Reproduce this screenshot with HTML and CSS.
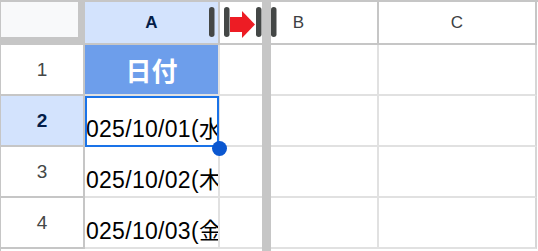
FILE: index.html
```html
<!DOCTYPE html>
<html lang="ja">
<head>
<meta charset="utf-8">
<title>Sheet</title>
<link rel="stylesheet" href="styles.css">
</head>
<body>
<div class="sheet">
  <div class="grid">
    <div class="corner"><div class="corner-inner"></div></div>
    <div class="colhead active">A</div>
    <div class="colhead wide">B</div>
    <div class="colhead last">C</div>

    <div class="rowhead">1</div>
    <div class="cell title"><span>日付</span></div>
    <div class="cell"></div>
    <div class="cell last"></div>

    <div class="rowhead active">2</div>
    <div class="cell selected"><div class="clip"><span>2025/10/01(水)</span></div></div>
    <div class="cell"></div>
    <div class="cell last"></div>

    <div class="rowhead">3</div>
    <div class="cell"><div class="clip"><span>2025/10/02(木)</span></div></div>
    <div class="cell"></div>
    <div class="cell last"></div>

    <div class="rowhead">4</div>
    <div class="cell"><div class="clip"><span>2025/10/03(金)</span></div></div>
    <div class="cell"></div>
    <div class="cell last"></div>
  </div>
  <div class="freeze-bar"></div>
  <svg class="resize-marker" width="80" height="45" viewBox="0 0 80 45" aria-hidden="true">
    <rect x="4" y="7" width="5.5" height="30" rx="2.75" fill="#444746"/>
    <rect x="19" y="7" width="5.5" height="30" rx="2.75" fill="#444746"/>
    <rect x="51" y="7" width="5.5" height="30" rx="2.75" fill="#444746"/>
    <rect x="66" y="7" width="5.5" height="30" rx="2.75" fill="#444746"/>
    <rect x="25" y="17" width="12.5" height="15" fill="#ed1c24"/>
    <polygon points="37,11 50,24.5 37,38" fill="#ed1c24"/>
  </svg>
</div>
</body>
</html>
```
FILE: styles.css
```css
html, body {
  margin: 0;
  padding: 0;
  background: #ffffff;
}

body {
  font-family: "Liberation Sans", Arial, "Noto Sans CJK JP", sans-serif;
}

.sheet {
  position: relative;
  width: 537px;
  height: 249px;
  border-top: 2px solid #c6c6c6;
  border-left: 1px solid #c6c6c6;
  border-right: 1px solid #e4e4e4;
  overflow: hidden;
}

.grid {
  display: grid;
  grid-template-columns: 84px 135px 159px 158px;
  grid-template-rows: 43px 51px 51px 51px 51px;
}

.grid > div {
  box-sizing: border-box;
}

.corner {
  background: #c6c6c6;
  padding: 0 7px 8px 0;
}

.corner-inner {
  width: 100%;
  height: 100%;
  background: #f8f9fa;
}

.colhead {
  display: flex;
  align-items: center;
  justify-content: center;
  background: #ffffff;
  border-right: 2px solid #c6c6c6;
  border-bottom: 2px solid #c6c6c6;
  font-size: 17px;
  color: #3c4043;
}

.colhead.active {
  background: #d3e3fd;
  color: #041e49;
  font-weight: bold;
}

.rowhead {
  display: flex;
  align-items: center;
  justify-content: center;
  background: #ffffff;
  border-right: 2px solid #c6c6c6;
  border-bottom: 2px solid #c6c6c6;
  font-size: 19px;
  color: #444746;
}

.rowhead.active {
  background: #d3e3fd;
  color: #041e49;
  font-weight: bold;
}

.cell {
  position: relative;
  border-right: 2px solid #e1e1e1;
  border-bottom: 2px solid #e1e1e1;
  background: #ffffff;
}

.cell.last {
  border-right-color: #d6d6d6;
}

.cell.title {
  display: flex;
  align-items: center;
  justify-content: center;
  background: #6d9eeb;
  color: #ffffff;
  font-family: "Noto Sans CJK JP", sans-serif;
  font-weight: bold;
  font-size: 26px;
  line-height: 1;
  padding-top: 0;
}

.clip {
  display: flex;
  justify-content: center;
  align-items: flex-end;
  width: 100%;
  height: 100%;
  overflow: hidden;
  padding-bottom: 4px;
  box-sizing: border-box;
}

.clip span {
  flex-shrink: 0;
  white-space: nowrap;
  font-size: 23px;
  line-height: 24px;
  letter-spacing: 0.3px;
  color: #000000;
}

.cell.selected::after {
  content: "";
  position: absolute;
  left: 0;
  top: 0;
  right: -1px;
  bottom: -2px;
  border: 2px solid #1a73e8;
  z-index: 2;
}

.cell.selected::before {
  content: "";
  position: absolute;
  left: 126.5px;
  top: 44.5px;
  width: 15px;
  height: 15px;
  border-radius: 50%;
  background: #0b57d0;
  z-index: 3;
}

.freeze-bar {
  position: absolute;
  left: 261px;
  top: -2px;
  width: 9px;
  height: 253px;
  background: #c6c6c6;
  z-index: 4;
}

.resize-marker {
  position: absolute;
  left: 204px;
  top: -2px;
  z-index: 5;
}
```
